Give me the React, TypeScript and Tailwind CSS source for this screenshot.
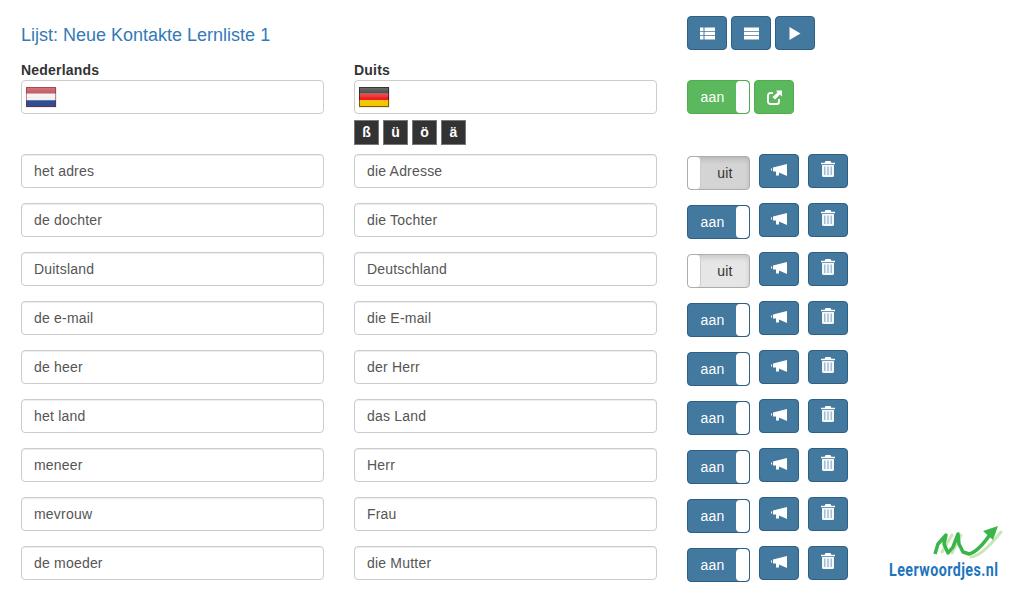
const words = [
  { nl: 'het adres', de: 'die Adresse', state: 'off-hover' },
  { nl: 'de dochter', de: 'die Tochter', state: 'on' },
  { nl: 'Duitsland', de: 'Deutschland', state: 'off' },
  { nl: 'de e-mail', de: 'die E-mail', state: 'on' },
  { nl: 'de heer', de: 'der Herr', state: 'on' },
  { nl: 'het land', de: 'das Land', state: 'on' },
  { nl: 'meneer', de: 'Herr', state: 'on' },
  { nl: 'mevrouw', de: 'Frau', state: 'on' },
  { nl: 'de moeder', de: 'die Mutter', state: 'on' },
];

function ThListIcon() {
  return (
    <svg width="15" height="13" viewBox="0 0 15 13" fill="currentColor">
      <path d="M0 0.500h3.500v3.500H0zM4.500 0.500H15v3.500H4.500zM0 4.800h3.500v3.500H0zM4.500 4.800H15v3.500H4.500zM0 9.100h3.500v3.500H0zM4.500 9.100H15v3.500H4.500z" />
    </svg>
  );
}

function BarsIcon() {
  return (
    <svg width="15" height="13" viewBox="0 0 15 13" fill="currentColor">
      <path d="M0 0.500h15v3.500H0zM0 4.800h15v3.500H0zM0 9.100h15v3.500H0z" />
    </svg>
  );
}

function PlayIcon() {
  return (
    <svg width="12" height="13" viewBox="0 0 12 13" fill="currentColor">
      <path d="M0.500 0L11.500 6.500L0.500 13z" />
    </svg>
  );
}

function ShareIcon() {
  return (
    <svg width="15" height="15" viewBox="0 0 15 15" fill="none" stroke="currentColor">
      <path d="M6 3H3.500A2.500 2.500 0 0 0 1 5.500v6A2.500 2.500 0 0 0 3.500 14h6a2.500 2.500 0 0 0 2.500-2.500V9" strokeWidth="2" />
      <path d="M9 0.500H15V6.500L13 4.500L8 9.500L5.500 7L10.500 2.500z" fill="currentColor" stroke="none" />
    </svg>
  );
}

function BullhornIcon() {
  return (
    <svg width="16" height="12" viewBox="0 0 16 12" fill="currentColor">
      <path d="M0 4.500h1v2H0zM2 3.500L16 0V12L8 8.500V11.500H5V7.500H2z" />
    </svg>
  );
}

function TrashIcon() {
  return (
    <svg width="14" height="16" viewBox="0 0 14 16" fill="currentColor">
      <path d="M4.500 0h5l.8 1.800H14v1.400H0V1.800h3.700z" />
      <path d="M1 4h12v10.500a1.500 1.500 0 0 1-1.500 1.500h-9A1.500 1.500 0 0 1 1 14.500z" opacity="0.95" />
      <path d="M3.200 5.500h1.200v8.500H3.200zM6.400 5.500h1.200v8.500H6.400zM9.600 5.500h1.200v8.500H9.600z" fill="#8fb0c8" />
    </svg>
  );
}

function Flag({ id, colors, border }: { id: string; colors: string[]; border: string }) {
  return (
    <svg width="32" height="22" viewBox="0 0 32 22" className="block">
      <defs>
        <linearGradient id={id} x1="0" y1="0" x2="0" y2="1">
          <stop offset="0" stopColor="#fff" stopOpacity="0.35" />
          <stop offset="0.5" stopColor="#fff" stopOpacity="0.1" />
          <stop offset="0.55" stopColor="#000" stopOpacity="0" />
          <stop offset="1" stopColor="#000" stopOpacity="0.05" />
        </linearGradient>
      </defs>
      <rect x="1.500" y="1.500" width="30" height="20" fill="#000" opacity="0.15" />
      <rect x="1" y="1" width="30" height="6.700" fill={colors[0]} />
      <rect x="1" y="7.700" width="30" height="6.600" fill={colors[1]} />
      <rect x="1" y="14.300" width="30" height="6.700" fill={colors[2]} />
      <rect x="1" y="1" width="30" height="20" fill={`url(#${id})`} />
      <rect x="1.500" y="1.500" width="29" height="19" fill="none" stroke={border} strokeOpacity="0.5" />
    </svg>
  );
}

function Field({ value }: { value: string }) {
  return (
    <div className="h-[34px] w-[303px] rounded-[4px] border border-[#ccc] bg-white px-3 text-[14px] leading-[32px] tracking-[0.2px] text-[#555] shadow-[inset_0_1px_1px_rgba(0,0,0,0.075)]">
      {value}
    </div>
  );
}

function IconButton({ children, className = 'items-center' }: { children: React.ReactNode; className?: string }) {
  return (
    <button className={`flex h-[34px] w-[40px] justify-center rounded-[4px] border border-[#2e5f85] bg-[#43789f] text-white ${className}`}>
      {children}
    </button>
  );
}

function Toggle({ state }: { state: string }) {
  if (state === 'off' || state === 'off-hover') {
    const bg =
      state === 'off'
        ? 'bg-[#e6e6e6] shadow-[inset_0_3px_5px_rgba(0,0,0,0.125)]'
        : 'bg-[#d4d4d4] shadow-[inset_0_3px_5px_rgba(0,0,0,0.125)]';
    return (
      <div className={`mt-[2px] flex h-[34px] w-[63px] overflow-hidden rounded-[4px] border border-[#adadad] text-[14px] leading-[32px] text-[#333] ${bg}`}>
        <span className="h-full w-[13px] rounded-[4px] border-r border-[#ccc] bg-white"></span>
        <span className="flex-1 text-center tracking-[0.2px]">uit</span>
      </div>
    );
  }
  return (
    <div className="mt-[2px] flex h-[34px] w-[63px] overflow-hidden rounded-[4px] border border-[#2e5f85] bg-[#43789f] text-[14px] leading-[32px] text-white">
      <span className="flex-1 pl-[1px] text-center tracking-[0.2px]">aan</span>
      <span className="h-full w-[13px] rounded-[4px] bg-white"></span>
    </div>
  );
}

function Logo() {
  return (
    <div className="absolute left-[889px] top-[522px] w-[116px]">
      <svg width="80" height="42" viewBox="0 0 80 42" className="ml-[36px] block" fill="none">
        <path d="M17 30L27 13M27 31L36 13M46 35C56 34 67 21 76 10" stroke="#c9e6b5" strokeWidth="3" strokeLinecap="round" />
        <path d="M10 32L13 22L21 13L19 22L23 31L28 25L33 12L34 22L38 30L44 32C52 30 60 20 66 11" stroke="#39b54a" strokeWidth="3.500" strokeLinejoin="round" />
        <path d="M58 9L73 4L68 18z" fill="#39b54a" />
      </svg>
      <span className="-mt-[4px] block origin-left scale-x-[0.75] whitespace-nowrap font-['Roboto',sans-serif] text-[19px] font-bold leading-[20px] tracking-[0.6px] text-[#1c75bc]">
        Leerwoordjes.nl
      </span>
    </div>
  );
}

export default function App() {
  return (
    <div className="relative h-[594px] w-[1009px] overflow-hidden bg-white pl-[21px] font-['Liberation_Sans',sans-serif] text-[14px] text-[#333]">
      {/* Header */}
      <div className="flex h-[68px]">
        <h3 className="w-[666px] pt-[25px] text-[18px] leading-[20px] text-[#337ab7]">Lijst: Neue Kontakte Lernliste 1</h3>
        <div className="flex gap-[4px] pt-[16px]">
          <IconButton><ThListIcon /></IconButton>
          <IconButton><BarsIcon /></IconButton>
          <IconButton><PlayIcon /></IconButton>
        </div>
      </div>

      {/* Language row */}
      <div className="flex h-[86px] gap-[30px]">
        <div className="w-[303px]">
          <label className="block h-[12px] text-[14px] font-bold leading-[4px] tracking-[0.2px]">Nederlands</label>
          <div className="h-[34px] rounded-[4px] border border-[#ccc] px-[3px] pt-[5px]">
            <Flag id="nl" colors={['#b8323d', '#f4f4f4', '#2f5196']} border="#8f1520" />
          </div>
        </div>
        <div className="w-[303px]">
          <label className="block h-[12px] text-[14px] font-bold leading-[4px] tracking-[0.2px]">Duits</label>
          <div className="h-[34px] rounded-[4px] border border-[#ccc] px-[3px] pt-[5px]">
            <Flag id="de" colors={['#222222', '#ee2020', '#ffcc00']} border="#000000" />
          </div>
          <div className="mt-[6px] flex gap-[4px]">
            {['ß', 'ü', 'ö', 'ä'].map((k) => (
              <span key={k} className="h-[25px] w-[25px] border border-[#777] bg-[#333] text-center text-[14px] font-bold leading-[23px] text-white">
                {k}
              </span>
            ))}
          </div>
        </div>
        <div className="flex gap-[4px] pt-[12px]">
          <div className="flex h-[34px] w-[63px] overflow-hidden rounded-[4px] border border-[#4cae4c] bg-[#5cb85c] text-[14px] leading-[32px] text-white">
            <span className="flex-1 pl-[1px] text-center tracking-[0.2px]">aan</span>
            <span className="h-full w-[13px] rounded-[4px] bg-white"></span>
          </div>
          <button className="flex h-[34px] w-[40px] items-center justify-center rounded-[4px] border border-[#4cae4c] bg-[#5cb85c] text-white">
            <ShareIcon />
          </button>
        </div>
      </div>

      {/* Word rows */}
      <div className="flex flex-col gap-[13px]">
        {words.map((w) => (
          <div key={w.nl} className="flex gap-[30px]">
            <Field value={w.nl} />
            <Field value={w.de} />
            <div className="flex items-start">
              <Toggle state={w.state} />
              <div className="ml-[9px] flex gap-[9px]">
                <IconButton className="items-start pt-[9px]"><BullhornIcon /></IconButton>
                <IconButton className="items-start pt-[6px]"><TrashIcon /></IconButton>
              </div>
            </div>
          </div>
        ))}
      </div>

      <Logo />
    </div>
  );
}
